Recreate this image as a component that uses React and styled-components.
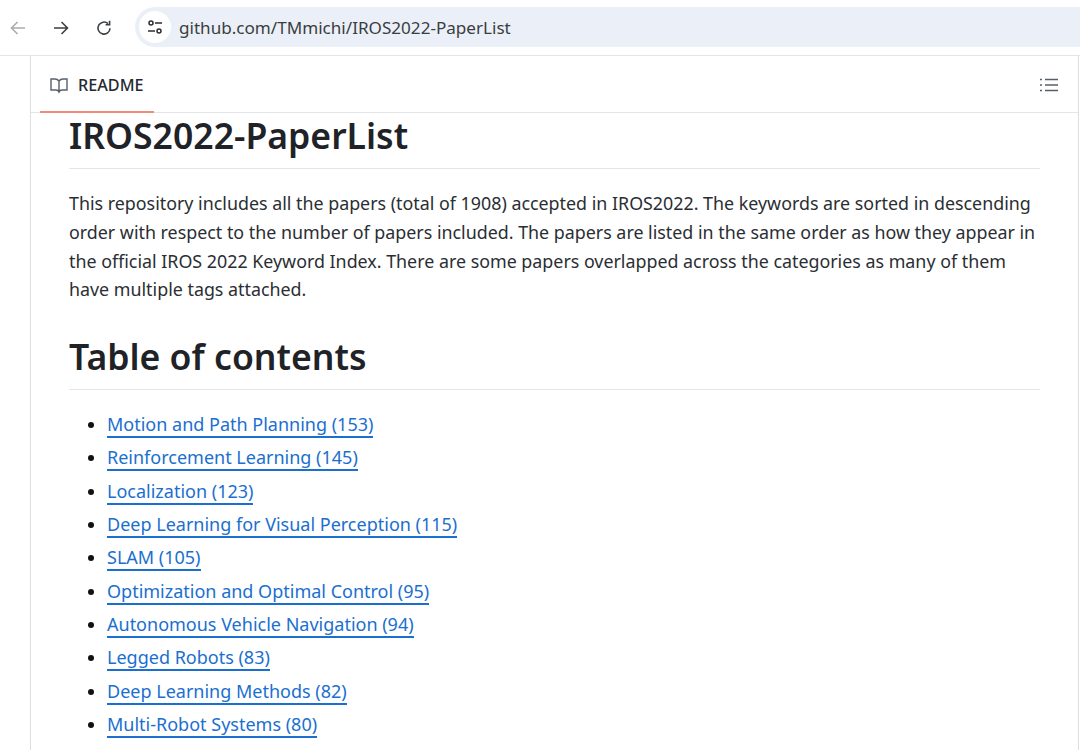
import React from 'react';
import styled, { createGlobalStyle } from 'styled-components';

const GlobalStyle = createGlobalStyle`
  html, body {
    margin: 0;
    padding: 0;
    background: #fff;
    overflow: hidden;
  }
  body {
    font-family: "Noto Sans", "Open Sans", "Liberation Sans", sans-serif;
    color: #1f2328;
  }
`;

const Page = styled.div`
  width: 1080px;
  height: 750px;
  overflow: hidden;
`;

const Toolbar = styled.div`
  height: 56px;
  box-sizing: border-box;
  border-bottom: 1px solid #e6e6e6;
  display: flex;
  align-items: center;
  padding-left: 9px;
`;

const NavButton = styled.span`
  width: 18px;
  height: 18px;
  margin-right: 25px;
  display: flex;
  color: ${(p) => (p.$off ? '#a9acb0' : '#3c4043')};
`;

const AddressBar = styled.div`
  flex: 1;
  height: 40px;
  margin-left: -3px;
  margin-top: -1px;
  border-radius: 20px 0 0 20px;
  background: #ebf0f8;
  display: flex;
  align-items: center;
  padding-left: 4px;
`;

const SiteIcon = styled.span`
  width: 32px;
  height: 32px;
  border-radius: 50%;
  background: #fff;
  display: flex;
  align-items: center;
  justify-content: center;
  color: #2b2d30;
`;

const Url = styled.span`
  margin-left: 8px;
  font-size: 17.1px;
  color: #3a3d41;
`;

const Panel = styled.div`
  margin-left: 30px;
  margin-right: 1px;
  height: 694px;
  border-left: 1px solid #dedede;
  border-right: 1px solid #dedede;
`;

const TabBar = styled.div`
  height: 57px;
  box-sizing: border-box;
  border-bottom: 1px solid #e4e6e8;
  display: flex;
  justify-content: space-between;
  padding-right: 20px;
`;

const ReadmeTab = styled.div`
  width: 114px;
  margin-left: 9px;
  height: 57px;
  box-sizing: border-box;
  padding-top: 2px;
  border-bottom: 2px solid #f28b78;
  display: flex;
  align-items: center;
  padding-left: 10px;
  gap: 10px;
  font-size: 16.2px;
  font-weight: 500;
  color: #24292f;
`;

const OutlineIcon = styled.span`
  display: flex;
  align-items: center;
  padding-top: 2px;
  color: #57606a;
`;

const Article = styled.div`
  padding: 0 38px;
`;

const Title = styled.h1`
  margin: 0;
  height: 56px;
  box-sizing: border-box;
  border-bottom: 1px solid #e4e7ea;
  font-size: 35.6px;
  line-height: 44px;
  font-weight: 600;
  color: #1f2328;
`;

const Intro = styled.p`
  margin: 20px 0 0;
  font-size: 17.85px;
  line-height: 28.8px;
  color: #2a2e33;
`;

const Heading = styled.h2`
  margin: 32px 0 0;
  height: 54px;
  box-sizing: border-box;
  border-bottom: 1px solid #e4e7ea;
  font-size: 35.6px;
  line-height: 40px;
  font-weight: 600;
  color: #1f2328;
`;

const Contents = styled.ul`
  margin: 18px 0 0;
  padding: 0 0 0 38px;
  font-size: 18px;
  line-height: 33.3px;
  color: #111;
`;

const Entry = styled.li`
  height: 33.3px;
`;

const EntryLink = styled.a`
  color: #1a6fd0;
  text-decoration: none;
  border-bottom: 2px solid #1a6fd0;
`;

const entries = [
  'Motion and Path Planning (153)',
  'Reinforcement Learning (145)',
  'Localization (123)',
  'Deep Learning for Visual Perception (115)',
  'SLAM (105)',
  'Optimization and Optimal Control (95)',
  'Autonomous Vehicle Navigation (94)',
  'Legged Robots (83)',
  'Deep Learning Methods (82)',
  'Multi-Robot Systems (80)',
];

const App = () => {
  return (
    <Page>
      <GlobalStyle />
      <Toolbar>
        <NavButton $off>
          <svg width="18" height="18" viewBox="0 0 18 18" fill="none" stroke="currentColor" strokeWidth="1.6">
            <path d="M16 9H2.500M8.500 3 2.500 9l6 6" />
          </svg>
        </NavButton>
        <NavButton>
          <svg width="18" height="18" viewBox="0 0 18 18" fill="none" stroke="currentColor" strokeWidth="1.6">
            <path d="M2 9h13.500M9.500 3l6 6-6 6" />
          </svg>
        </NavButton>
        <NavButton>
          <svg width="18" height="18" viewBox="0 0 18 18" fill="none" stroke="currentColor" strokeWidth="1.6">
            <path d="M15 9.200A6 6 0 1 1 13 4.600" />
            <path d="M14.600 1.800v4h-4" />
          </svg>
        </NavButton>
        <AddressBar>
          <SiteIcon>
            <svg width="18" height="18" viewBox="0 0 18 18" fill="none" stroke="currentColor" strokeWidth="1.5">
              <circle cx="5" cy="5" r="2" />
              <path d="M9 5h7M2 13h7" />
              <circle cx="13" cy="13" r="2" />
            </svg>
          </SiteIcon>
          <Url>github.com/TMmichi/IROS2022-PaperList</Url>
        </AddressBar>
      </Toolbar>
      <Panel>
        <TabBar>
          <ReadmeTab>
            <OutlineIcon>
              <svg width="18" height="16" viewBox="0 0 18 16" fill="none" stroke="currentColor" strokeWidth="1.4">
                <path d="M9 3C8 1.700 6.800 1 5 1H1v11h5c1.500 0 2.500.7 3 2 .5-1.300 1.500-2 3-2h5V1h-4C11.200 1 10 1.700 9 3Zm0 0v11" />
              </svg>
            </OutlineIcon>
            README
          </ReadmeTab>
          <OutlineIcon>
            <svg width="18" height="16" viewBox="0 0 18 16" fill="none" stroke="currentColor" strokeWidth="1.6">
              <path d="M5 2.500h13M5 8h13M5 13.500h13M0 2.500h2M0 8h2M0 13.500h2" />
            </svg>
          </OutlineIcon>
        </TabBar>
        <Article>
          <Title>IROS2022-PaperList</Title>
          <Intro>
            This repository includes all the papers (total of 1908) accepted in IROS2022. The keywords are sorted in descending order with respect to the number of papers included. The papers are listed in the same order as how they appear in the official IROS 2022 Keyword Index. There are some papers overlapped across the categories as many of them have multiple tags attached.
          </Intro>
          <Heading>Table of contents</Heading>
          <Contents>
            {entries.map((label) => (
              <Entry key={label}>
                <EntryLink href="#">{label}</EntryLink>
              </Entry>
            ))}
          </Contents>
        </Article>
      </Panel>
    </Page>
  );
};

export default App;
